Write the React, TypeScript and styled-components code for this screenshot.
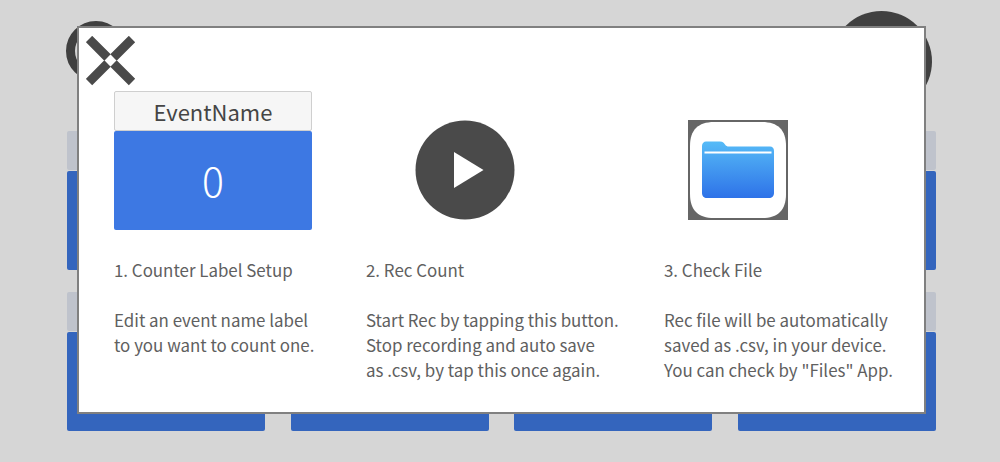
import React from "react";
import styled, { createGlobalStyle } from "styled-components";

const Global = createGlobalStyle`
  html, body { margin: 0; padding: 0; background: #d6d6d6; }
  body { font-family: "Noto Sans CJK JP", "Noto Sans", sans-serif; overflow: hidden; }
`;

const Screen = styled.div`
  position: relative;
  width: 1000px;
  height: 462px;
  box-sizing: border-box;
  padding: 0 64px 0 67px;
  background: #d6d6d6;
  overflow: hidden;
`;

const TopBar = styled.div`
  display: flex;
  justify-content: space-between;
  align-items: flex-start;
  height: 131px;
  padding-right: 4px;
`;

const LeftRing = styled.div`
  box-sizing: border-box;
  width: 60px;
  height: 60px;
  margin: 21px 0 0 -1px;
  border: 9px solid #404040;
  border-radius: 50%;
`;

const RightDisc = styled.div`
  width: 101px;
  height: 101px;
  margin-top: 11px;
  border-radius: 50%;
  background: #404040;
`;

const CounterGrid = styled.div`
  display: grid;
  grid-template-columns: repeat(4, 198px);
  justify-content: space-between;
  row-gap: 22px;
`;

const BackCounter = styled.div`
  display: flex;
  flex-direction: column;
  height: 139px;
`;

const BackLabel = styled.div`
  height: 39px;
  flex: none;
  margin-bottom: 1px;
  border-radius: 2px;
  background: #bfc3cc;
`;

const BackValue = styled.div`
  flex: 1;
  border-radius: 2px;
  background: #3465bd;
`;

const Modal = styled.div`
  position: absolute;
  left: 77px;
  top: 26px;
  width: 849px;
  height: 388px;
  box-sizing: border-box;
  border: 2px solid #808080;
  background: #fff;
  padding: 63px 0 0 35px;
  display: grid;
  grid-template-columns: 252px 298px 1fr;
  color: #606060;
`;

const CloseIcon = styled.svg`
  position: absolute;
  left: 7px;
  top: 8px;
  width: 50px;
  height: 50px;
`;

const Step = styled.section`
  display: flex;
  flex-direction: column;
  align-items: flex-start;
`;

const Visual = styled.div<{ $left: number; $top: number }>`
  box-sizing: border-box;
  height: 139px;
  padding: ${(p) => p.$top}px 0 0 ${(p) => p.$left}px;
  margin-bottom: 27px;
`;

const Counter = styled.div`
  display: flex;
  flex-direction: column;
  width: 198px;
`;

const CounterName = styled.div`
  box-sizing: border-box;
  height: 40px;
  border: 1px solid #cfcfcf;
  border-radius: 2px;
  background: #f6f6f6;
  color: #454545;
  font-size: 22px;
  line-height: 38px;
  text-align: center;
`;

const CounterValue = styled.div`
  height: 99px;
  border-radius: 2px;
  background: #3d78e3;
  color: #fff;
  font-size: 41px;
  font-weight: 300;
  line-height: 96px;
  text-align: center;
`;

const IconSvg = styled.svg`
  display: block;
  width: 100px;
  height: 100px;
`;

const Title = styled.h2`
  margin: 0 0 25px;
  font-size: 16.9px;
  font-weight: 400;
  line-height: 25px;
  white-space: nowrap;
`;

const Body = styled.p`
  margin: 0;
  font-size: 16.9px;
  line-height: 25px;
  white-space: pre-line;
`;

const counters = Array.from({ length: 8 }, (_, i) => i);

export default function App() {
  return (
    <Screen>
      <Global />
      <TopBar>
        <LeftRing />
        <RightDisc />
      </TopBar>
      <CounterGrid>
        {counters.map((i) => (
          <BackCounter key={i}>
            <BackLabel />
            <BackValue />
          </BackCounter>
        ))}
      </CounterGrid>
      <Modal>
        <CloseIcon viewBox="0 0 50 50">
          <path
            d="M3 3 L21.500 21.500 M46 3 L27.500 21.500 M3 46 L21.500 27.500 M46 46 L27.500 27.500"
            stroke="#4a4a4a"
            strokeWidth="9"
            fill="none"
          />
        </CloseIcon>
        <Step>
          <Visual $left={0} $top={0}>
            <Counter>
              <CounterName>EventName</CounterName>
              <CounterValue>0</CounterValue>
            </Counter>
          </Visual>
          <Title>1. Counter Label Setup</Title>
          <Body>{"Edit an event name label\nto you want to count one."}</Body>
        </Step>
        <Step>
          <Visual $left={49} $top={29}>
            <IconSvg viewBox="0 0 100 100">
              <circle cx="50" cy="50" r="49.500" fill="#4a4a4a" />
              <path d="M39 32 L68.500 50 L39 68 Z" fill="#fff" />
            </IconSvg>
          </Visual>
          <Title>2. Rec Count</Title>
          <Body>{"Start Rec by tapping this button.\nStop recording and auto save\nas .csv, by tap this once again."}</Body>
        </Step>
        <Step>
          <Visual $left={24} $top={29}>
            <IconSvg viewBox="0 0 100 100">
              <defs>
                <linearGradient id="folderFill" x1="0" y1="0" x2="0" y2="1">
                  <stop offset="0" stopColor="#56bbf7" />
                  <stop offset="1" stopColor="#2e72e8" />
                </linearGradient>
              </defs>
              <rect width="100" height="100" fill="#666" />
              <path d="M26 2 H74 C90 2 98 10 98 26 V74 C98 90 90 98 74 98 H26 C10 98 2 90 2 74 V26 C2 10 10 2 26 2 Z" fill="#fff" />
              <path d="M14 26 C14 23 16 21.500 18 21.500 H32 C35 21.500 36 23 37 24.500 C38 26 39 26.500 41 26.500 H82 C84.500 26.500 86 28 86 31 V73 C86 76 84 78 81 78 H19 C16 78 14 76 14 73 Z" fill="url(#folderFill)" />
              <rect x="16.500" y="31.500" width="67" height="2" fill="#fff" />
            </IconSvg>
          </Visual>
          <Title>3. Check File</Title>
          <Body>{'Rec file will be automatically\nsaved as .csv, in your device.\nYou can check by "Files" App.'}</Body>
        </Step>
      </Modal>
    </Screen>
  );
}
